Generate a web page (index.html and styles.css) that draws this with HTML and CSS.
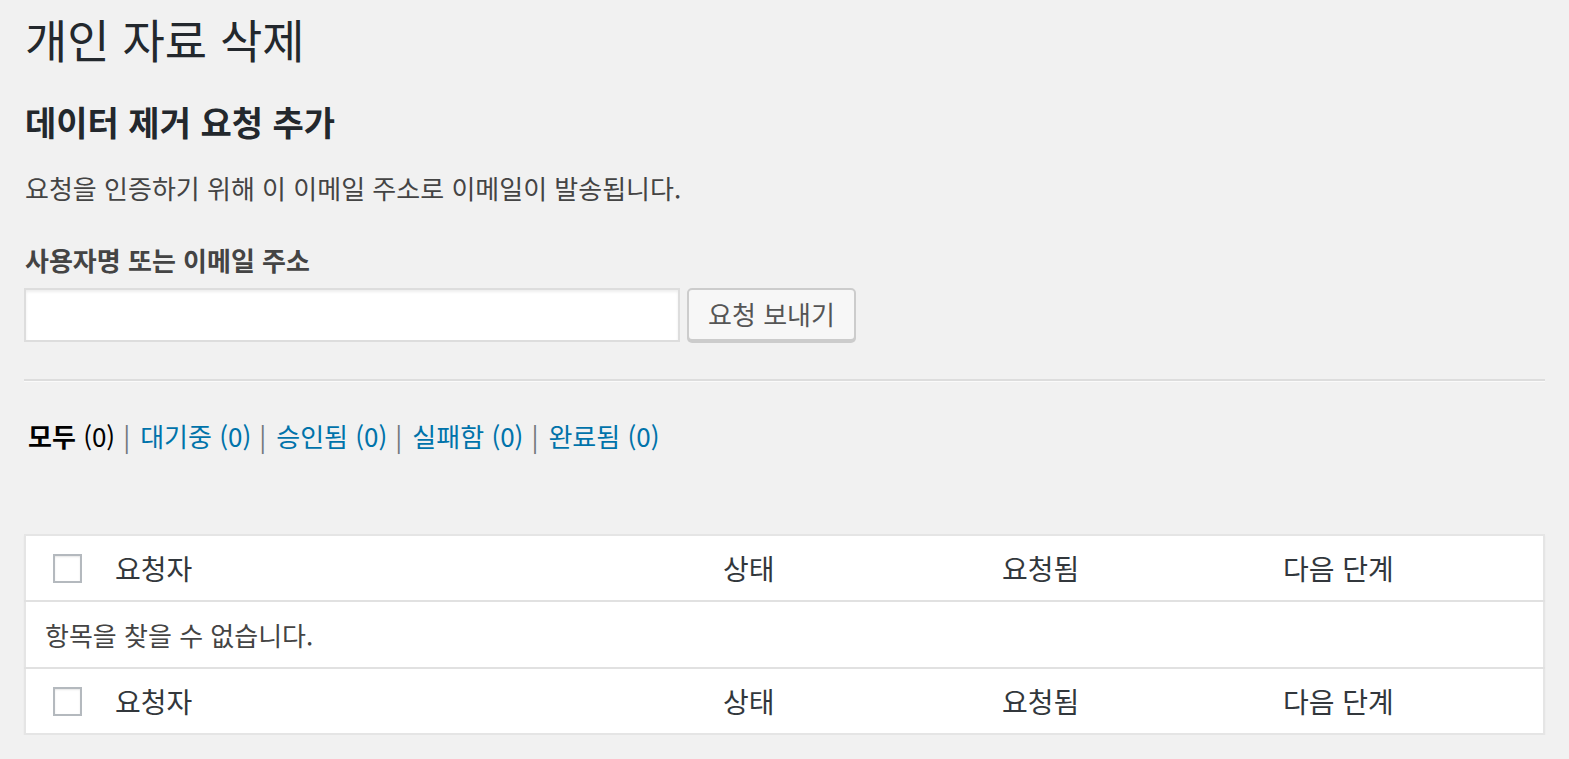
FILE: index.html
```html
<!DOCTYPE html>
<html lang="ko">
<head>
<meta charset="utf-8">
<title>개인 자료 삭제</title>
<link rel="stylesheet" href="styles.css">
</head>
<body>
<div class="wrap">
  <h1 class="page-title">개인 자료 삭제</h1>
  <h2 class="section-title">데이터 제거 요청 추가</h2>
  <p class="description">요청을 인증하기 위해 이 이메일 주소로 이메일이 발송됩니다.</p>
  <label class="field-label" for="username">사용자명 또는 이메일 주소</label>
  <div class="form-row">
    <input class="text-input" id="username" type="text">
    <button class="button" type="button">요청 보내기</button>
  </div>
  <hr class="divider">
  <ul class="filters">
    <li><a class="current">모두 <span class="count">(0)</span></a><span class="sep">|</span></li>
    <li><a class="link">대기중 <span class="count">(0)</span></a><span class="sep">|</span></li>
    <li><a class="link">승인됨 <span class="count">(0)</span></a><span class="sep">|</span></li>
    <li><a class="link">실패함 <span class="count">(0)</span></a><span class="sep">|</span></li>
    <li><a class="link">완료됨 <span class="count">(0)</span></a></li>
  </ul>
  <table class="list-table">
    <colgroup>
      <col class="col-check">
      <col class="col-primary">
      <col class="col-status">
      <col class="col-date">
      <col class="col-next">
    </colgroup>
    <thead>
      <tr>
        <td class="check-cell"><span class="checkbox"></span></td>
        <th class="head-cell head-primary">요청자</th>
        <th class="head-cell">상태</th>
        <th class="head-cell">요청됨</th>
        <th class="head-cell">다음 단계</th>
      </tr>
    </thead>
    <tbody>
      <tr>
        <td class="empty-cell" colspan="5">항목을 찾을 수 없습니다.</td>
      </tr>
    </tbody>
    <tfoot>
      <tr>
        <td class="check-cell"><span class="checkbox"></span></td>
        <th class="head-cell head-primary">요청자</th>
        <th class="head-cell">상태</th>
        <th class="head-cell">요청됨</th>
        <th class="head-cell">다음 단계</th>
      </tr>
    </tfoot>
  </table>
</div>
</body>
</html>
```

FILE: styles.css
```css
html, body {
  margin: 0;
  padding: 0;
  background: #f1f1f1;
}
body {
  font-family: "Noto Sans CJK KR", "Noto Sans", sans-serif;
  color: #444;
  font-size: 26px;
}
.wrap {
  padding: 8px 24px 0 24px;
}
.page-title {
  margin: 0;
  font-size: 46px;
  line-height: 60px;
  font-weight: 400;
  color: #23282d;
  padding-left: 1px;
}
.section-title {
  margin: 32px 0 0 0;
  font-size: 34px;
  line-height: 44px;
  font-weight: 700;
  color: #23282d;
  padding-left: 1px;
}
.description {
  margin: 26px 0 0 0;
  font-size: 26px;
  line-height: 36px;
  padding-left: 1px;
}
.field-label {
  display: block;
  margin-top: 36px;
  font-size: 26px;
  line-height: 36px;
  font-weight: 700;
  color: #444;
  padding-left: 1px;
}
.form-row {
  display: flex;
  align-items: flex-start;
  gap: 7px;
  margin-top: 10px;
}
.text-input {
  box-sizing: border-box;
  width: 656px;
  height: 54px;
  margin: 0;
  border: 2px solid #ddd;
  background: #fff;
  box-shadow: inset 0 2px 3px rgba(0,0,0,0.07);
  outline: none;
}
.button {
  box-sizing: border-box;
  width: 169px;
  height: 53px;
  margin: 0;
  border: 2px solid #ccc;
  border-radius: 5px;
  background: #f7f7f7;
  box-shadow: 0 2px 0 #ccc;
  color: #555;
  font-family: "Noto Sans CJK KR", "Noto Sans", sans-serif;
  font-size: 26px;
  line-height: 1;
  padding: 0 0 2px 0;
}
.divider {
  margin: 37px 0 0 0;
  border: 0;
  border-top: 2px solid #ddd;
  border-bottom: 1px solid #fafafa;
  height: 0;
}
.filters {
  list-style: none;
  margin: 36px 0 0 0;
  padding: 0 0 0 4px;
  display: flex;
  font-size: 26px;
  line-height: 36px;
}
.filters li {
  display: flex;
}
.filters a {
  text-decoration: none;
}
.filters .current {
  color: #000;
  font-weight: 700;
}
.filters .current .count {
  font-weight: 400;
}
.filters .link {
  color: #0073aa;
}
.sep {
  color: #72777c;
  padding: 0 10px 0 8px;
}
.list-table {
  margin-top: 80px;
  width: 100%;
  box-sizing: border-box;
  border-collapse: collapse;
  background: #fff;
  border: 2px solid #e5e5e5;
  box-shadow: 0 2px 2px rgba(0,0,0,0.04);
  table-layout: fixed;
}
.col-check { width: 74px; }
.col-status { width: 279px; }
.col-date { width: 281px; }
.col-next { width: 275px; }
.check-cell {
  height: 64px;
  padding: 0 0 0 27px;
  vertical-align: middle;
}
.checkbox {
  display: block;
  box-sizing: border-box;
  width: 29px;
  height: 29px;
  border: 2px solid #b4b9be;
  background: #fff;
  box-shadow: inset 0 1px 2px rgba(0,0,0,0.1);
}
.head-cell {
  text-align: left;
  font-weight: 400;
  color: #32373c;
  font-size: 28px;
  padding: 0 0 0 14px;
  vertical-align: middle;
}
.head-primary {
  padding-left: 16px;
}
thead tr {
  border-bottom: 2px solid #e1e1e1;
}
tfoot tr {
  border-top: 2px solid #e1e1e1;
}
.empty-cell {
  height: 65px;
  padding: 0 0 0 19px;
  font-size: 26px;
  color: #444;
  vertical-align: middle;
}
```
